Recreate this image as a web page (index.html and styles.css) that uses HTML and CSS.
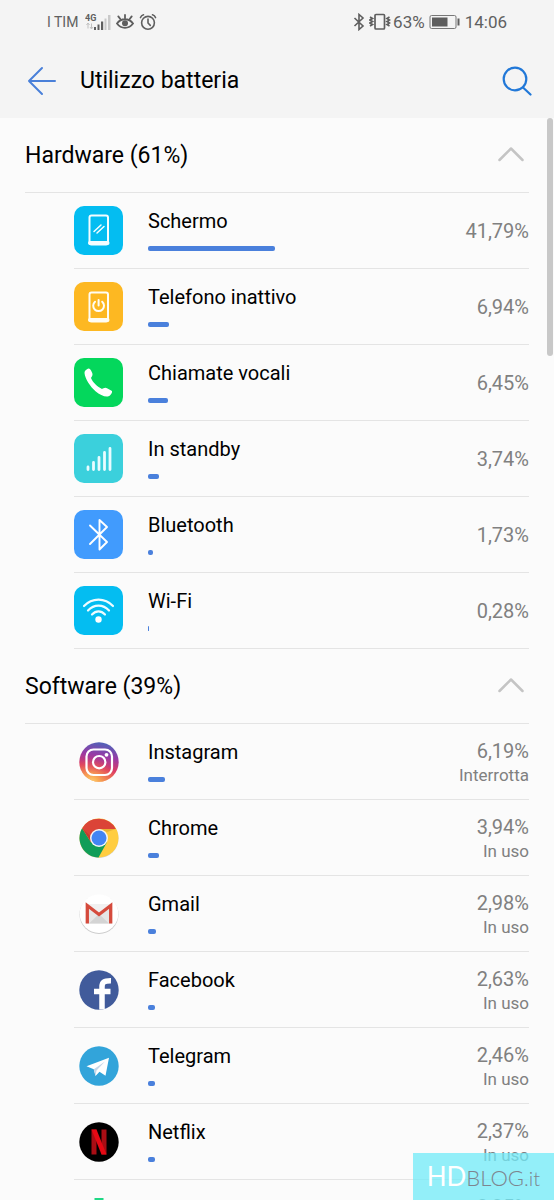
FILE: index.html
```html
<!DOCTYPE html>
<html lang="it">
<head>
<meta charset="utf-8">
<meta name="viewport" content="width=device-width, initial-scale=1">
<title>Utilizzo batteria</title>
<link rel="stylesheet" href="styles.css">
</head>
<body>
<div class="screen">
  <header class="top">
    <div class="status">
      <div class="status-group">
        <span class="carrier">I TIM</span>
        <svg class="signal" width="26" height="20" viewBox="0 0 26 20" aria-hidden="true">
          <text x="0" y="9" class="net">4G</text>
          <path d="M3 11.500v5M1.500 13l1.500-2 1.500 2M6.500 11.500v5M5 15l1.500 2L8 15" fill="none" stroke="#c0c0c0"/>
          <path d="M9 15h2v3H9zM12.500 12.500h2V18h-2zM16 9.500h2.200V18H16z" fill="#5e5e5e"/>
          <path d="M19.500 6.500h2V18h-2zM23 3h2.500v15H23z" fill="#c9c9c9"/>
        </svg>
        <svg width="18" height="18" viewBox="0 0 18 18" fill="none" stroke="#5e5e5e" stroke-width="1.800" stroke-linecap="round" aria-hidden="true">
          <path d="M1 10.500C5 4.800 13 4.800 17 10.500C13 16.200 5 16.200 1 10.500ZM9 5V2M4.300 6L2.300 3.400M13.700 6L15.700 3.400"/>
          <circle cx="9" cy="10.300" r="3" fill="#5e5e5e" stroke="none"/>
        </svg>
        <svg width="18" height="18" viewBox="0 0 18 18" fill="none" stroke="#5e5e5e" stroke-width="1.600" stroke-linecap="round" aria-hidden="true">
          <circle cx="9" cy="9.800" r="6.400"/><path d="M9 6v4l2.300 2.400M1.500 4.600C2 3.200 3 2.200 4.500 1.800M16.500 4.600C16 3.200 15 2.200 13.500 1.800"/>
        </svg>
      </div>
      <div class="status-group status-right">
        <svg width="12" height="18" viewBox="0 0 12 18" fill="none" stroke="#5e5e5e" stroke-width="1.600" aria-hidden="true">
          <path d="M1.500 5l8.500 8-4 3.500V1.500L10 5l-8.500 8"/>
        </svg>
        <svg class="vibrate" width="22" height="18" viewBox="0 0 22 18" fill="none" stroke="#5e5e5e" stroke-width="1.700" aria-hidden="true">
          <rect x="6" y="1.500" width="9.500" height="14.500" rx="1"/>
          <path d="M1 4l2.500 1.500L1 7l2.500 1.500L1 10l2.500 1.500L1 13M20.500 4L18 5.500 20.500 7 18 8.500l2.500 1.500-2.500 1.500 2.500 1.500"/>
        </svg>
        <span class="clock">63%</span>
        <svg class="battery" width="32" height="16" viewBox="0 0 32 16" aria-hidden="true">
          <rect x="1" y="1.500" width="26" height="13" rx="1.500" fill="none" stroke="#777" stroke-width="1"/>
          <path d="M3 3.500h15.500v9H3zM28.500 4.500h2v7h-2z" fill="#5e5e5e"/>
        </svg>
        <time class="clock">14:06</time>
      </div>
    </div>
    <div class="bar">
      <button class="icon-button" aria-label="Indietro">
        <svg width="30" height="30" viewBox="0 0 30 30" fill="none" stroke="#4a80d9" stroke-width="2" stroke-linecap="round" stroke-linejoin="round"><path d="M28 15H2M15 2L2 15l13 13"/></svg>
      </button>
      <h1 class="title">Utilizzo batteria</h1>
      <button class="icon-button" aria-label="Cerca">
        <svg width="30" height="30" viewBox="0 0 30 30" fill="none" stroke="#2178d8" stroke-width="2.200" stroke-linecap="round"><circle cx="13" cy="13" r="11.300"/><path d="M21 21.500l7.500 7"/></svg>
      </button>
    </div>
  </header>

  <main class="content">
    <div class="thumb"></div>
    <section>
      <h2 class="section-head"><button class="section-toggle" aria-expanded="true">Hardware (61%)
        <svg width="26" height="16" viewBox="0 0 26 16" fill="none" stroke="#c4c4c4" stroke-width="2.500" stroke-linecap="round" stroke-linejoin="round" aria-hidden="true"><path d="M1.500 13L13 1.500L24.500 13"/></svg></button></h2>
      <ul class="list">
        <li class="row">
          <div class="icon"><svg class="tile cyan" viewBox="0 0 49 49" fill="none" stroke="#f5fdff" stroke-width="2" stroke-linecap="round"><rect x="15.500" y="9.500" width="18.500" height="29" rx="2"/><path d="M16 37h17.500" stroke-width="4"/><path d="M20 25.500l7-6.500M23 27l7-6.500" stroke-width="1.500"/></svg></div>
          <div class="info"><span class="name">Schermo</span><div class="track"><div class="fill" style="width:41.79%"></div></div></div>
          <div class="value"><span class="percent">41,79%</span></div>
        </li>
        <li class="row">
          <div class="icon"><svg class="tile amber" viewBox="0 0 49 49" fill="none" stroke="#fffdf5" stroke-width="2" stroke-linecap="round"><rect x="15.500" y="10.500" width="18.500" height="29" rx="2"/><path d="M16 38h17.500" stroke-width="4"/><path d="M21 19.700a5.400 5.400 0 1 0 7.200 0M24.600 18v5.500"/></svg></div>
          <div class="info"><span class="name">Telefono inattivo</span><div class="track"><div class="fill" style="width:6.94%"></div></div></div>
          <div class="value"><span class="percent">6,94%</span></div>
        </li>
        <li class="row">
          <div class="icon"><svg class="tile green" viewBox="0 0 49 49"><path d="M13 11.200C15 9.500 16.500 11 18 14.500C19.400 17.500 17.500 18.500 17 20C18.500 24 23.500 29 28 31C29.500 30.500 31 29 33.500 30.500L38 33C38.500 35 36.500 37.500 34.500 38.300C31 39.200 26 37 21.500 33.200C16 28.500 11 20.500 10.500 15C10.500 13 11.500 12 13 11.200Z" fill="#fff"/></svg></div>
          <div class="info"><span class="name">Chiamate vocali</span><div class="track"><div class="fill" style="width:6.45%"></div></div></div>
          <div class="value"><span class="percent">6,45%</span></div>
        </li>
        <li class="row">
          <div class="icon"><svg class="tile teal" viewBox="0 0 49 49" fill="none" stroke="#e9fcff" stroke-width="2.800" stroke-linecap="round"><path d="M14 35.500V33M19.500 35.500V28.500M25 35.500V23.500M30.500 35.500V18.500M36 35.500V14.500"/></svg></div>
          <div class="info"><span class="name">In standby</span><div class="track"><div class="fill" style="width:3.74%"></div></div></div>
          <div class="value"><span class="percent">3,74%</span></div>
        </li>
        <li class="row">
          <div class="icon"><svg class="tile blue" viewBox="0 0 49 49" fill="none" stroke="#fff" stroke-width="1.900" stroke-linecap="round" stroke-linejoin="round"><path d="M16 15.500L33 32l-7.500 7.500V10L33 17L16 34"/></svg></div>
          <div class="info"><span class="name">Bluetooth</span><div class="track"><div class="fill" style="width:1.73%"></div></div></div>
          <div class="value"><span class="percent">1,73%</span></div>
        </li>
        <li class="row">
          <div class="icon"><svg class="tile cyan" viewBox="0 0 49 49" fill="none" stroke="#eefcff" stroke-width="2.200" stroke-linecap="round"><path d="M10 20C18 11.500 31 11.500 39 20M14 24.500C20 18 29 18 35 24.500M18 28.500C22 24.300 27 24.300 31 28.500"/><circle cx="24.500" cy="33.500" r="3.200" fill="#fff" stroke="none"/></svg></div>
          <div class="info"><span class="name">Wi-Fi</span><div class="track"><div class="fill" style="width:0.28%"></div></div></div>
          <div class="value"><span class="percent">0,28%</span></div>
        </li>
      </ul>
    </section>

    <section>
      <h2 class="section-head"><button class="section-toggle" aria-expanded="true">Software (39%)
        <svg width="26" height="16" viewBox="0 0 26 16" fill="none" stroke="#c4c4c4" stroke-width="2.500" stroke-linecap="round" stroke-linejoin="round" aria-hidden="true"><path d="M1.500 13L13 1.500L24.500 13"/></svg></button></h2>
      <ul class="list apps">
        <li class="row">
          <div class="icon"><svg class="app" viewBox="0 0 40 40">
            <defs>
              <linearGradient id="ig-base" x1=".6" y1="0" x2=".4" y2="1"><stop offset="0" stop-color="#4d63b8"/><stop offset=".35" stop-color="#9a3aa5"/><stop offset=".65" stop-color="#dc3b64"/><stop offset="1" stop-color="#f49a4b"/></linearGradient>
              <radialGradient id="ig-glow" cx=".3" cy="1.050" r=".65"><stop offset="0" stop-color="#ffdc7d"/><stop offset=".3" stop-color="#fbb055" stop-opacity=".9"/><stop offset="1" stop-color="#ee5a4a" stop-opacity="0"/></radialGradient>
            </defs>
            <circle cx="20" cy="20" r="19.700" fill="url(#ig-base)"/><circle cx="20" cy="20" r="19.700" fill="url(#ig-glow)"/>
            <g fill="none" stroke="#fff" stroke-width="2.200"><rect x="7.500" y="7.500" width="25.500" height="25.500" rx="7"/><circle cx="20.200" cy="20.200" r="6.200"/></g><circle cx="27.500" cy="12.800" r="1.900" fill="#fff"/></svg></div>
          <div class="info"><span class="name">Instagram</span><div class="track"><div class="fill" style="width:6.19%"></div></div></div>
          <div class="value"><span class="percent">6,19%</span><span class="state">Interrotta</span></div>
        </li>
        <li class="row">
          <div class="icon"><svg class="app" viewBox="0 0 40 40">
            <circle cx="20" cy="20.500" r="19.500" fill="#d0d0d0"/>
            <circle cx="20" cy="20" r="19.500" fill="#ffcd40"/>
            <path d="M20 20L12.200 24.500L3.100 10.250A19.500 19.500 0 0 0 19.500 39.500L27.800 24.500Z" fill="#109d58"/>
            <path d="M3.100 10.250A19.500 19.500 0 0 1 36.900 11L20 11L12.200 24.500Z" fill="#db4437"/>
            <path d="M3.100 10.250L12.200 24.500L11.500 18Z" fill="#a5352b" opacity=".45"/>
            <path d="M20 11H36.900L28 14Z" fill="#c28a20" opacity=".4"/>
            <circle cx="20" cy="20" r="9" fill="#f4f4f4"/><circle cx="20" cy="20" r="7.500" fill="#4285f4"/></svg></div>
          <div class="info"><span class="name">Chrome</span><div class="track"><div class="fill" style="width:3.94%"></div></div></div>
          <div class="value"><span class="percent">3,94%</span><span class="state">In uso</span></div>
        </li>
        <li class="row">
          <div class="icon"><svg class="app" viewBox="0 0 40 40">
            <circle cx="20" cy="20.500" r="19.500" fill="#ccc"/><circle cx="20" cy="19.700" r="19.300" fill="#fff"/>
            <path d="M7 10h26v19.500H7z" fill="#e6e6e6"/><path d="M10 29.500L20 20l10 9.500z" fill="#d4d4d4"/><path d="M8 10h24L20 19.500z" fill="#f1f1f1"/>
            <path d="M8.300 29.500V11.500L20 20.500L31.700 11.500V29.500" fill="none" stroke="#d54b3d" stroke-width="3.300"/></svg></div>
          <div class="info"><span class="name">Gmail</span><div class="track"><div class="fill" style="width:2.98%"></div></div></div>
          <div class="value"><span class="percent">2,98%</span><span class="state">In uso</span></div>
        </li>
        <li class="row">
          <div class="icon"><svg class="app" viewBox="0 0 40 40">
            <circle cx="20" cy="20" r="19.700" fill="#415b9b"/>
            <path d="M23 39.500V17C23 12 25 10.700 32 10.800M15 21.500h16.500" fill="none" stroke="#fff" stroke-width="5.500"/></svg></div>
          <div class="info"><span class="name">Facebook</span><div class="track"><div class="fill" style="width:2.63%"></div></div></div>
          <div class="value"><span class="percent">2,63%</span><span class="state">In uso</span></div>
        </li>
        <li class="row">
          <div class="icon"><svg class="app" viewBox="0 0 40 40">
            <circle cx="20" cy="20" r="19.700" fill="#32a4da"/>
            <path d="M7.500 20.300L30 11.800L26.500 29.700L20.500 25.800L16.500 30L14.800 23.300Z" fill="#fff"/>
            <path d="M14.800 23.300L26 15.500L17.500 24.500L16.500 30Z" fill="#c5d6e8"/></svg></div>
          <div class="info"><span class="name">Telegram</span><div class="track"><div class="fill" style="width:2.46%"></div></div></div>
          <div class="value"><span class="percent">2,46%</span><span class="state">In uso</span></div>
        </li>
        <li class="row">
          <div class="icon"><svg class="app" viewBox="0 0 40 40">
            <circle cx="20" cy="20" r="19.700" fill="#000"/>
            <path d="M12.500 7.500h5v25h-5zM22.500 7.500h5v25h-5z" fill="#a90d14"/><path d="M12.500 7.500h5l10 25h-5z" fill="#e50914"/></svg></div>
          <div class="info"><span class="name">Netflix</span><div class="track"><div class="fill" style="width:2.37%"></div></div></div>
          <div class="value"><span class="percent">2,37%</span><span class="state">In uso</span></div>
        </li>
        <li class="row">
          <div class="icon"><svg class="app" viewBox="0 0 40 40">
            <path d="M15.500 0h9v8H32v9a4 4 0 0 1 0 8v9H8V8h7.500z" fill="#1fd885"/></svg></div>
          <div class="info"><span class="name">Google Play Services</span><div class="track"><div class="fill" style="width:2.35%"></div></div></div>
          <div class="value"><span class="percent">2,35%</span><span class="state">In uso</span></div>
        </li>
      </ul>
    </section>
  </main>
  <div class="watermark"><span class="mark-hd">HD</span><span class="mark-blog">BLOG</span><span class="mark-it">.it</span></div>
</div>
</body>
</html>
```
FILE: styles.css
```css
* { box-sizing: border-box; }

body {
  margin: 0;
  background: #fbfbfb;
  color: #000;
  font-family: Roboto, "Liberation Sans", sans-serif;
}

button {
  border: 0;
  padding: 0;
  background: none;
  color: inherit;
  font: inherit;
  cursor: pointer;
}

svg { display: block; flex: none; }

.screen {
  position: relative;
  display: flex;
  flex-direction: column;
  height: 100vh;
  overflow: hidden;
}

.top {
  flex: none;
  background: #f4f4f4;
}

.status {
  display: flex;
  justify-content: space-between;
  height: 44px;
  padding: 0 47px;
  color: #606060;
}

.status-group {
  display: flex;
  align-items: center;
  gap: 5px;
}

.carrier { font-size: 14px; margin-right: 2px; }
.net { font-size: 9px; font-weight: 700; fill: #5e5e5e; }
.clock { font-size: 17px; }
.status-right { gap: 4px; }
.vibrate { margin-right: -2px; }

.bar {
  display: flex;
  align-items: center;
  height: 74px;
  padding: 0 22px 0 27px;
}

.title {
  flex: 1;
  margin: 0 0 0 23px;
  font-size: 23px;
  line-height: 28px;
  font-weight: 400;
}

.content {
  position: relative;
  flex: 1;
  min-height: 0;
  overflow: hidden;
}

.thumb {
  position: absolute;
  top: 0;
  right: 1px;
  width: 6px;
  height: 22%;
  border-radius: 3px;
  background: #c8c8c8;
}

.section-head {
  margin: 0 25px;
  border-bottom: 1px solid #e4e4e4;
  font-size: 23px;
  font-weight: 400;
}

.section-toggle {
  display: flex;
  align-items: center;
  justify-content: space-between;
  width: 100%;
  height: 74px;
  padding-right: 5px;
  text-align: left;
}

.list {
  margin: 0 25px 0 74px;
  padding: 0;
  list-style: none;
}

.row {
  display: flex;
  align-items: center;
  height: 76px;
  border-bottom: 1px solid #e4e4e4;
}

.icon {
  display: flex;
  align-items: center;
  justify-content: center;
  width: 49px;
  height: 49px;
  margin-right: 25px;
}

.tile {
  width: 49px;
  height: 49px;
  border-radius: 10px;
}

.app { width: 40px; height: 40px; }

.cyan { background: #04bdf1; }
.amber { background: #fdb822; }
.green { background: #04d75c; }
.teal { background: #3bd0dc; }
.blue { background: #419bfd; }

.info {
  display: flex;
  flex: 1;
  flex-direction: column;
  gap: 13px;
  padding-bottom: 2px;
}

.name {
  font-size: 20px;
  line-height: 24px;
  white-space: nowrap;
}

.track { height: 5px; }
.apps .track { width: 92%; }

.fill {
  height: 100%;
  border-radius: 2px;
  background: #4a80dc;
}

.value {
  display: flex;
  flex-direction: column;
  align-items: flex-end;
  width: 77px;
  color: #808080;
}

.apps .value { padding-top: 2px; }

.percent { font-size: 20px; line-height: 24px; }
.state { font-size: 17px; line-height: 24px; }

.watermark {
  position: absolute;
  right: 0;
  bottom: 0;
  display: flex;
  align-items: baseline;
  height: 47px;
  padding: 0 14px;
  background: rgba(112, 235, 248, 0.75);
  color: #7d858f;
  font-family: Lato, "Liberation Sans", sans-serif;
  font-weight: 300;
  line-height: 47px;
}

.mark-hd { color: #fff; font-size: 26px; font-weight: 400; }
.mark-blog { font-size: 22px; }
.mark-it { font-size: 20px; }
```
